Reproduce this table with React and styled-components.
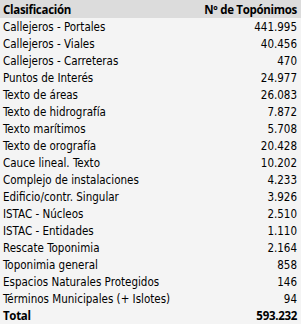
import React from "react";
import styled, { createGlobalStyle } from "styled-components";

const Global = createGlobalStyle`
  html, body { margin: 0; padding: 0; background: #f4f4f4; }
`;

const rows = [
  ["Callejeros - Portales", "441.995"],
  ["Callejeros - Viales", "40.456"],
  ["Callejeros - Carreteras", "470"],
  ["Puntos de Interés", "24.977"],
  ["Texto de áreas", "26.083"],
  ["Texto de hidrografía", "7.872"],
  ["Texto marítimos", "5.708"],
  ["Texto de orografía", "20.428"],
  ["Cauce lineal. Texto", "10.202"],
  ["Complejo de instalaciones", "4.233"],
  ["Edificio/contr. Singular", "3.926"],
  ["ISTAC - Núcleos", "2.510"],
  ["ISTAC - Entidades", "1.110"],
  ["Rescate Toponimia", "2.164"],
  ["Toponimia general", "858"],
  ["Espacios Naturales Protegidos", "146"],
  ["Términos Municipales (+ Islotes)", "94"],
];

const Table = styled.div`
  width: 301px;
  height: 324px;
  background: #f4f4f4;
  display: flex;
  flex-direction: column;
  color: #000;
`;

const Row = styled.div`
  display: flex;
  justify-content: space-between;
  align-items: center;
  height: ${(p) => (p.$head ? 18 : 17)}px;
  padding: 0 4px 0 3px;
  background: ${(p) => (p.$head ? "#dcdcdc" : "#f4f4f4")};
`;

const Cell = styled.span`
  white-space: nowrap;
  font-family: ${(p) =>
    p.$bold ? '"Open Sans", sans-serif' : '"DejaVu Sans Condensed", "DejaVu Sans", sans-serif'};
  font-stretch: ${(p) => (p.$bold ? "normal" : "condensed")};
  font-weight: ${(p) => (p.$bold ? 700 : 400)};
  font-size: ${(p) => (p.$bold ? "11.5px" : "11.5px")};
  letter-spacing: ${(p) => (p.$bold ? "-0.3px" : "0")};
`;

export default function App() {
  return (
    <>
      <Global />
      <Table>
        <Row $head>
          <Cell $bold>Clasificación</Cell>
          <Cell $bold>Nº de Topónimos</Cell>
        </Row>
        {rows.map(([a, b]) => (
          <Row key={a}>
            <Cell>{a}</Cell>
            <Cell>{b}</Cell>
          </Row>
        ))}
        <Row>
          <Cell $bold>Total</Cell>
          <Cell $bold>593.232</Cell>
        </Row>
      </Table>
    </>
  );
}
